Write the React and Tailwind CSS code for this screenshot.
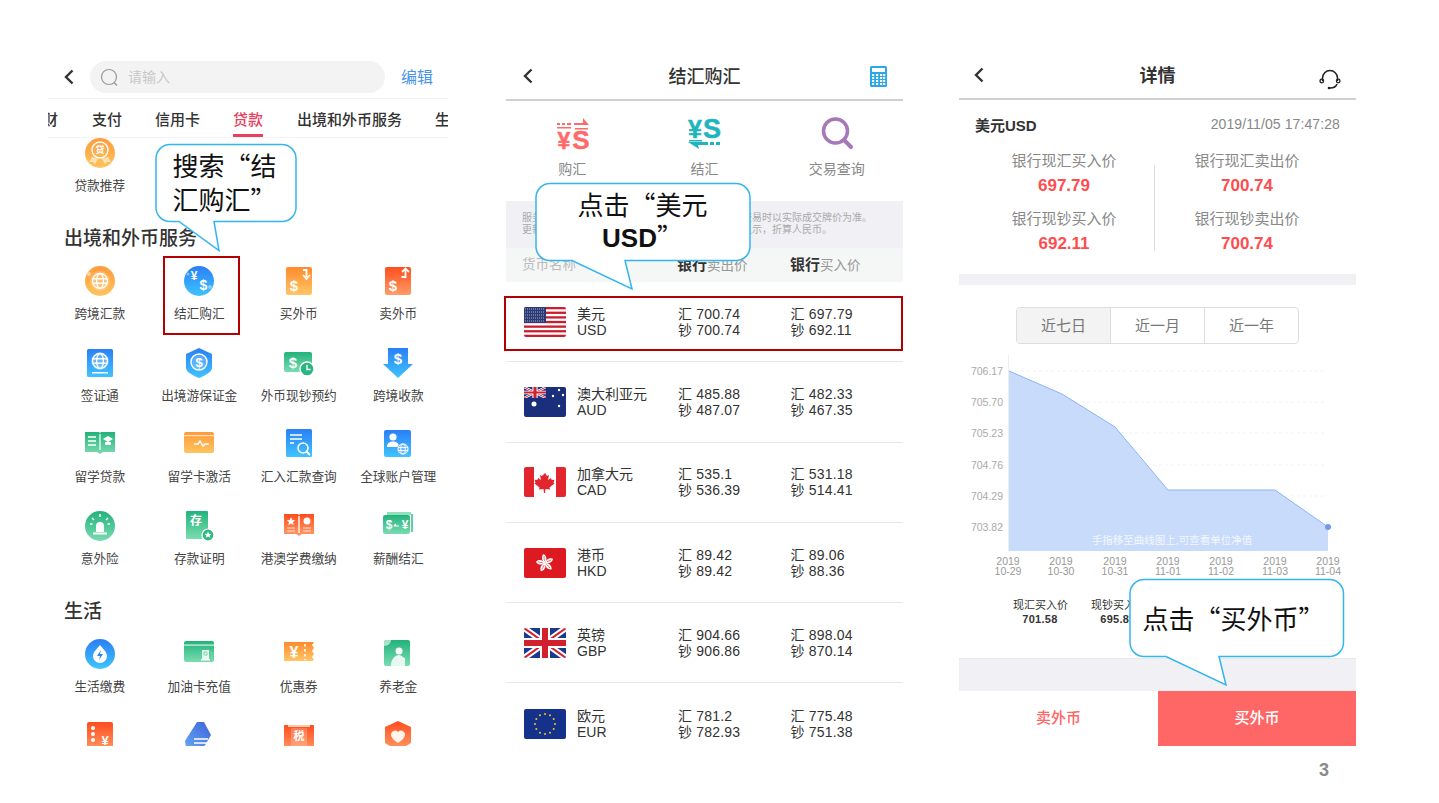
import React from "react";

const W = "#ffffff";
const T = ({ x = 15, y = 15, s = 12, c = W, w = 700, children, a = "middle" }) => (
  <text x={x} y={y} fontSize={s} fill={c} fontWeight={w} textAnchor={a} dominantBaseline="central">{children}</text>
);
const Globe = ({ x = 15, y = 15, r = 7, c = W, sw = 1.3 }) => (
  <g fill="none" stroke={c} strokeWidth={sw}>
    <circle cx={x} cy={y} r={r} />
    <ellipse cx={x} cy={y} rx={r * 0.45} ry={r} />
    <path d={`M${x - r} ${y - r * 0.3}H${x + r}M${x - r} ${y + r * 0.3}H${x + r}`} />
  </g>
);

const icons = {
  loan: (
    <>
      <circle cx="15" cy="15" r="15" fill="url(#gO)" />
      <circle cx="15" cy="12" r="8" fill="none" stroke={W} strokeWidth="1.4" />
      <T y={12} s={9}>贷</T>
      <path d="M7 19l-3 5 4 0 2 2 3-5M23 19l3 5-4 0-2 2-3-5" fill="#ffe2b5" />
    </>
  ),
  globe: (
    <>
      <circle cx="15" cy="15" r="15" fill="url(#gO)" />
      <circle cx="15" cy="15" r="10" fill="#ffffff" fillOpacity=".2" />
      <Globe r={7.5} />
      <circle cx="4" cy="8" r="2" fill="#ffffff" fillOpacity=".5" />
    </>
  ),
  jh: (
    <>
      <circle cx="15" cy="15" r="15" fill="url(#gB)" />
      <T x={10} y={10} s={12}>¥</T>
      <T x={19.5} y={18.5} s={14}>$</T>
      <circle cx="26" cy="21" r="2" fill="#ffffff" fillOpacity=".4" />
      <circle cx="4" cy="8" r="1.5" fill="#ffffff" fillOpacity=".4" />
    </>
  ),
  buy: (
    <>
      <rect x="2" y="1" width="26" height="28" rx="2" fill="url(#gO2)" />
      <T x={10} y={19} s={15}>$</T>
      <path d="M19 4h3.5v7M19 9l3.5 4 3.5-4" fill="none" stroke={W} strokeWidth="1.8" />
    </>
  ),
  sell: (
    <>
      <rect x="2" y="1" width="26" height="28" rx="2" fill="url(#gR)" />
      <T x={10} y={19} s={15}>$</T>
      <path d="M19 6l3.5-3.5L26 6M22.5 3v8h-4" fill="none" stroke={W} strokeWidth="1.8" />
    </>
  ),
  visa: (
    <>
      <rect x="2" y="1" width="26" height="28" rx="1.5" fill="url(#gB)" />
      <circle cx="15" cy="13" r="9" fill="#ffffff" fillOpacity=".25" />
      <Globe y={13} r={7.5} />
      <rect x="7" y="24" width="16" height="1.5" fill={W} />
    </>
  ),
  shield: (
    <>
      <path d="M15 0l13 6v14c0 4-8 8-13 10C10 28 2 24 2 20V6z" fill="url(#gB)" />
      <circle cx="15" cy="14" r="8" fill="#ffffff" fillOpacity=".2" stroke={W} strokeWidth="1.4" />
      <T y={14} s={13}>$</T>
    </>
  ),
  cash: (
    <>
      <rect x="0" y="4" width="28" height="20" rx="2" fill="url(#gG)" />
      <T x={9} y={14} s={15}>$</T>
      <circle cx="23" cy="21" r="7" fill="#2bb583" stroke={W} strokeWidth="1.4" />
      <path d="M23 17v4.500h3.500" fill="none" stroke={W} strokeWidth="1.4" />
    </>
  ),
  down: (
    <>
      <path d="M5 0h20v16h5L15 30 0 16h5z" fill="url(#gB)" />
      <T y={10} s={15}>$</T>
    </>
  ),
  book: (
    <>
      <path d="M0 3l14 0 1 1 1-1 14 0v20H18l-3 2-3-2H0z" fill="url(#gG)" />
      <rect x="14.400" y="5" width="1.200" height="16" fill={W} />
      <path d="M3 8h8M3 12h8M3 16h8" stroke={W} strokeWidth="1.600" />
      <path d="M18 10l5-3 5 3-5 3zM20 13h6v3h-6z" fill={W} />
    </>
  ),
  card: (
    <>
      <rect x="0" y="3" width="30" height="21" rx="2" fill="url(#gO)" />
      <rect x="0" y="6" width="30" height="1.200" fill="#ffffff" fillOpacity=".7" />
      <path d="M10 15h4l2-3 3 5 2-2h4" fill="none" stroke={W} strokeWidth="1.400" />
    </>
  ),
  doc: (
    <>
      <rect x="2" y="0" width="26" height="28" rx="1.500" fill="url(#gB)" />
      <path d="M6 6h12M6 10h12M6 14h4" stroke={W} strokeWidth="1.500" />
      <circle cx="19" cy="19" r="5" fill="none" stroke={W} strokeWidth="1.600" />
      <path d="M22.500 22.500l3.500 3.500" stroke={W} strokeWidth="1.800" />
    </>
  ),
  user: (
    <>
      <rect x="1" y="1" width="27" height="27" rx="2" fill="url(#gB)" />
      <circle cx="10" cy="8" r="3.600" fill={W} />
      <path d="M4 18c0-4 3-5.500 6-5.500s6 1.500 6 5.500z" fill={W} />
      <circle cx="20" cy="20" r="6" fill="#6db7ff" />
      <Globe x={20} y={20} r={5} sw={0.9} />
    </>
  ),
  alarm: (
    <>
      <circle cx="15" cy="15" r="15" fill="url(#gG)" />
      <path d="M11 21v-6a4 4 0 018 0v6z" fill={W} />
      <rect x="8" y="21.500" width="14" height="2" fill={W} />
      <path d="M15 3v3M7 7l2 2M23 7l-2 2M5 13h2.500M25 13h-2.500" stroke={W} strokeWidth="1.400" />
    </>
  ),
  save: (
    <>
      <path d="M3 0h20a1 1 0 011 1v27H3a1 1 0 01-1-1V1a1 1 0 011-1z" fill="url(#gG)" />
      <T x={12} y={10} s={12}>存</T>
      <circle cx="24" cy="24" r="6" fill="#33b884" stroke={W} strokeWidth="1.200" />
      <path d="M24 20.500l1 2.300 2.400.2-1.800 1.500.6 2.300-2.200-1.200-2.200 1.200.6-2.300-1.800-1.500 2.400-.2z" fill={W} />
    </>
  ),
  redbook: (
    <>
      <path d="M0 3h14l1 1 1-1h14v20H18l-3 2-3-2H0z" fill="url(#gR)" />
      <rect x="14.300" y="5" width="1.400" height="17" fill={W} />
      <path d="M7 7l1 2.500h2.500l-2 1.500.7 2.500L7 12l-2.200 1.500.7-2.500-2-1.500H6zM3 17h8M3 20h8M19 17h8M19 20h8" stroke={W} fill={W} strokeWidth=".8" />
      <circle cx="23" cy="10" r="3.500" fill={W} />
    </>
  ),
  salary: (
    <>
      <path d="M4 1h24v3H4z" fill="#8fe0bb" />
      <path d="M28 3h2v18h-2z" fill="#5fd0a2" />
      <rect x="0" y="4" width="27" height="19" rx="2" fill="url(#gG)" />
      <T x={6} y={14} s={12}>$</T>
      <T x={22} y={14} s={12}>¥</T>
      <path d="M11 15h5M13 13l-2 2" stroke={W} strokeWidth="1.200" fill="none" />
    </>
  ),
  bolt: (
    <>
      <circle cx="15" cy="15" r="15" fill="url(#gB)" />
      <path d="M15 6c3 4 7 7 7 11a7 7 0 01-14 0c0-4 4-7 7-11z" fill={W} />
      <path d="M16 11l-4 6h3l-1 4 4-6h-3z" fill="#2b83f5" />
    </>
  ),
  gas: (
    <>
      <rect x="0" y="2" width="30" height="21" rx="2" fill="url(#gG)" />
      <rect x="0" y="5.500" width="30" height="1.200" fill="#ffffff" fillOpacity=".8" />
      <path d="M18 11h7v10h-7z" fill="#e9fbf3" />
      <path d="M20 13h3v3h-3zM26 12l2 2v5" stroke="#7bd6ae" fill="none" />
      <rect x="17" y="20" width="9" height="1.500" fill={W} />
    </>
  ),
  coupon: (
    <>
      <path d="M0 3h30l-2 3 2 3-2 3 2 3-2 3 2 3-2 1H0z" fill="url(#gO2)" />
      <T x={10} y={13} s={16}>¥</T>
      <path d="M21 5v16" stroke={W} strokeWidth="1.600" strokeDasharray="2.500 2.500" />
    </>
  ),
  elder: (
    <>
      <rect x="1" y="1" width="26" height="26" rx="2" fill="url(#gG)" />
      <path d="M1 3a2 2 0 012-2h5c0 3-3 6-7 6z" fill="#ffffff" fillOpacity=".6" />
      <circle cx="16" cy="12" r="3.500" fill={W} />
      <path d="M8 27c0-7 4-11 8-11 3 0 4 3 6 3v8z" fill="#e6f9f0" />
    </>
  ),
  traffic: (
    <>
      <rect x="2" y="1" width="26" height="30" rx="2" fill="url(#gR)" />
      <circle cx="8" cy="7" r="2" fill={W} />
      <circle cx="8" cy="13" r="2" fill={W} />
      <circle cx="8" cy="19" r="2" fill={W} />
      <T x={20} y={19} s={13}>¥</T>
    </>
  ),
  diamond: (
    <>
      <path d="M13 1h7l7 13-7 12H2L1 20z" fill="url(#gB3)" />
      <path d="M10 18h14M10 22h14" stroke={W} strokeWidth="1.500" />
    </>
  ),
  tax: (
    <>
      <rect x="0" y="4" width="30" height="26" rx="1" fill="url(#gR)" />
      <rect x="4" y="4" width="22" height="2" fill="#ffc9a8" />
      <rect x="7" y="7" width="16" height="20" fill="#ffffff" fillOpacity=".2" />
      <T y={15} s={11}>税</T>
    </>
  ),
  heart: (
    <>
      <path d="M15 0l13 6v16L15 30 2 22V6z" fill="url(#gR)" />
      <path d="M15 22c-4-3-7-5-7-9a4 4 0 017-2 4 4 0 017 2c0 4-3 6-7 9z" fill="#fff3ea" />
    </>
  ),
};

const Ico = ({ n }) => (
  <svg width="30" height="30" viewBox="0 0 30 30" className="block overflow-visible">{icons[n]}</svg>
);

const Item = ({ n, t }) => (
  <div className="flex h-[81.500px] flex-col items-center">
    <Ico n={n} />
    <div className="mt-[9px] h-[18px] whitespace-nowrap text-[12.700px] leading-[18px] text-[#444]">{t}</div>
  </div>
);

const Chevron = () => (
  <svg width="11" height="16" viewBox="0 0 11 16" className="block">
    <path d="M9.500 1.500L3 8l6.500 6.500" fill="none" stroke="#333" strokeWidth="2.400" />
  </svg>
);

const grid1 = [
  ["globe", "跨境汇款"], ["jh", "结汇购汇"], ["buy", "买外币"], ["sell", "卖外币"],
  ["visa", "签证通"], ["shield", "出境游保证金"], ["cash", "外币现钞预约"], ["down", "跨境收款"],
  ["book", "留学贷款"], ["card", "留学卡激活"], ["doc", "汇入汇款查询"], ["user", "全球账户管理"],
  ["alarm", "意外险"], ["save", "存款证明"], ["redbook", "港澳学费缴纳"], ["salary", "薪酬结汇"],
];
const grid2 = [
  ["bolt", "生活缴费"], ["gas", "加油卡充值"], ["coupon", "优惠券"], ["elder", "养老金"],
  ["traffic", ""], ["diamond", ""], ["tax", ""], ["heart", ""],
];

function Panel1() {
  return (
    <div className="h-[686px] w-[400px] shrink-0 overflow-hidden">
      <div className="flex h-[39px] items-start border-b border-[#f3f3f3]">
        <div className="ml-[15px] mt-[9px]"><Chevron /></div>
        <div className="ml-[16px] mt-[1px] flex h-[32px] w-[295px] items-center rounded-full bg-[#f3f3f3] pl-[10px]">
          <svg width="19" height="19" viewBox="0 0 19 19">
            <circle cx="9" cy="9" r="7.500" fill="none" stroke="#999" strokeWidth="1.200" />
            <path d="M14 14.500l3 3" stroke="#999" strokeWidth="1.200" />
          </svg>
          <span className="ml-[9px] text-[14px] text-[#c8c8c8]">请输入</span>
        </div>
        <span className="ml-[16px] mt-[8px] text-[16px] leading-5 text-[#4a94e8]">编辑</span>
      </div>
      <div className="flex h-[39px] items-center overflow-hidden whitespace-nowrap border-b border-[#f3f3f3] pt-[4px] text-[15px] font-medium text-[#333]">
        <span className="flex w-[10px] shrink-0 justify-end overflow-hidden">财</span>
        <span className="ml-[34px]">支付</span>
        <span className="ml-[33px]">信用卡</span>
        <span className="relative ml-[33px] flex h-full items-center text-[#e8405e]">
          贷款
          <span className="absolute bottom-0 left-0 h-[3px] w-full bg-[#e8405e]" />
        </span>
        <span className="ml-[34px]">出境和外币服务</span>
        <span className="ml-[33px] w-[15px] overflow-hidden">生</span>
      </div>
      <div className="grid h-[81.500px] grid-cols-4 pl-[2px]"><Item n="loan" t="贷款推荐" /></div>
      <div className="flex h-[46.500px] items-start pl-[16px] pt-[7px] text-[19px] font-medium leading-6 text-[#333]">出境和外币服务</div>
      <div className="grid grid-cols-4 pl-[2px]">
        {grid1.map(([n, t]) => <Item key={t} n={n} t={t} />)}
      </div>
      <div className="flex h-[47px] items-start pl-[16px] pt-[8px] text-[19px] font-medium leading-6 text-[#333]">生活</div>
      <div className="grid grid-cols-4 pl-[2px]">
        {grid2.map(([n, t]) => <Item key={n} n={n} t={t} />)}
      </div>
    </div>
  );
}

const Flag = ({ children }) => (
  <svg width="42" height="30" viewBox="0 0 42 30" className="block shrink-0 rounded-[2px]">{children}</svg>
);
const Union = ({ w = 42, h = 30 }) => (
  <svg width={w} height={h} viewBox="0 0 42 30" x="0" y="0" preserveAspectRatio="none">
    <rect width="42" height="30" fill="#1a3a8f" />
    <path d="M0 0l42 30M42 0L0 30" stroke="#fff" strokeWidth="6" />
    <path d="M0 0l42 30M42 0L0 30" stroke="#d3202f" strokeWidth="2" />
    <path d="M21 0v30M0 15h42" stroke="#fff" strokeWidth="10" />
    <path d="M21 0v30M0 15h42" stroke="#d3202f" strokeWidth="6" />
  </svg>
);
const stars = Array.from({ length: 12 }, (_, i) => {
  const a = (i * Math.PI) / 6;
  return [21 + 10 * Math.sin(a), 15 - 10 * Math.cos(a)];
});
const flags = {
  us: (
    <Flag>
      <rect width="42" height="30" fill="#fff" />
      {[0, 1, 2, 3, 4, 5, 6].map((i) => <rect key={i} y={i * 4.62} width="42" height="2.310" fill="#c8202f" />)}
      <rect width="22" height="16" fill="#2b3a75" />
      <path d="M1 2h20M1 5h20M1 8h20M1 11h20M1 14h20" stroke="#aab2d0" strokeWidth="1.200" strokeDasharray="1 1" />
    </Flag>
  ),
  au: (
    <Flag>
      <rect width="42" height="30" fill="#1a2f7c" />
      <Union w={22} h={11} />
      <circle cx="10" cy="17" r="2.500" fill="#fff" />
      {[[29, 9], [35, 3], [39, 8], [35, 19]].map(([x, y]) => <circle key={x + "" + y} cx={x} cy={y} r="1.200" fill="#fff" />)}
    </Flag>
  ),
  ca: (
    <Flag>
      <rect width="42" height="30" fill="#fff" />
      <rect width="10" height="30" fill="#e3262e" />
      <rect x="32" width="10" height="30" fill="#e3262e" />
      <path d="M21 6l2 3 2-1-1 5 3-2 .7 2 2.800-.3-1 3 1 .8-5 4 .5 2-4.500-.5-.5 4h-1l-.500-4-4.500.5.500-2-5-4 1-.8-1-3 2.800.3.700-2 3 2-1-5 2 1z" fill="#e3262e" />
    </Flag>
  ),
  hk: (
    <Flag>
      <rect width="42" height="30" fill="#dd1a22" />
      {[0, 72, 144, 216, 288].map((d) => (
        <g key={d} transform={`rotate(${d} 21 15)`}>
          <path d="M21 15c-3.500-2.500-4-6.500-1.500-9 3 1.500 4 5.500 1.500 9z" fill="#fff" />
          <path d="M20.500 13c-.5-2 -.5-3.500-.5-5" stroke="#dd1a22" strokeWidth=".6" fill="none" />
        </g>
      ))}
    </Flag>
  ),
  gb: <Flag><Union /></Flag>,
  eu: (
    <Flag>
      <rect width="42" height="30" fill="#14328c" />
      {stars.map(([x, y], i) => <circle key={i} cx={x} cy={y} r="1" fill="#f5c518" />)}
    </Flag>
  ),
};

const rows = [
  ["us", "美元", "USD", "700.74", "700.74", "697.79", "692.11"],
  ["au", "澳大利亚元", "AUD", "485.88", "487.07", "482.33", "467.35"],
  ["ca", "加拿大元", "CAD", "535.1", "536.39", "531.18", "514.41"],
  ["hk", "港币", "HKD", "89.42", "89.42", "89.06", "88.36"],
  ["gb", "英镑", "GBP", "904.66", "906.86", "898.04", "870.14"],
  ["eu", "欧元", "EUR", "781.2", "782.93", "775.48", "751.38"],
];

const Row = ({ r }) => (
  <div className="flex h-[80.300px] shrink-0 items-center border-b border-[#e8e8e8] pl-[18px] text-[14px] leading-4 text-[#333] last:border-b-0">
    {flags[r[0]]}
    <div className="ml-[11px] w-[101px]"><div>{r[1]}</div><div>{r[2]}</div></div>
    <div className="w-[112.500px] tracking-[0.2px]"><div>汇 {r[3]}</div><div>钞 {r[4]}</div></div>
    <div className="tracking-[0.2px]"><div>汇 {r[5]}</div><div>钞 {r[6]}</div></div>
  </div>
);

function Panel2() {
  return (
    <div className="flex h-[686px] w-[397px] shrink-0 flex-col overflow-hidden">
      <div className="relative flex h-[41px] shrink-0 items-center justify-center border-b-2 border-[#d0d0d4] pb-[4px]">
        <div className="absolute left-[16px] top-[8px]"><Chevron /></div>
        <span className="text-[18px] font-medium text-[#333]">结汇购汇</span>
        <svg width="17" height="21" viewBox="0 0 17 21" className="absolute left-[364px] top-[6px]">
          <rect width="17" height="21" rx="1.500" fill="#29a9e8" />
          <rect x="2" y="2" width="13" height="4" fill="#fff" />
          {[8, 11, 14, 17].map((y) => [2, 6, 10, 13].map((x) => <rect key={x + "-" + y} x={x} y={y} width="2.200" height="2" fill="#fff" />))}
        </svg>
      </div>
      <div className="grid h-[100px] shrink-0 grid-cols-3">
        <div className="flex flex-col items-center pt-[15px]">
          <svg width="34" height="34" viewBox="0 0 34 34" className="block">
            <path d="M19 7h9V2l6 7H19zM2 7h3v2H2zM7 7h3v2H7zM12 7h4v2h-4zM2 11h14v1.500H2zM20 12h13v1.500H20z" fill="#ff6b6b" />
            <text x="9" y="33" fontSize="23" fontWeight="700" fill="#ff6b6b" stroke="#ff6b6b" strokeWidth=".5" textAnchor="middle">¥</text>
            <text x="26" y="33" fontSize="26" fontWeight="700" fill="#ff6b6b" stroke="#ff6b6b" strokeWidth=".5" textAnchor="middle">S</text>
          </svg>
          <span className="mt-[9px] text-[14px] leading-5 text-[#888]">购汇</span>
        </div>
        <div className="flex flex-col items-center pt-[15px]">
          <svg width="34" height="34" viewBox="0 0 34 34" className="block">
            <text x="8" y="22" fontSize="25" fontWeight="700" fill="#1fb5bd" stroke="#1fb5bd" strokeWidth=".5" textAnchor="middle">¥</text>
            <text x="25" y="22" fontSize="27" fontWeight="700" fill="#1fb5bd" stroke="#1fb5bd" strokeWidth=".5" textAnchor="middle">S</text>
            <path d="M2 24h13v1.500H2zM1 26h20v3H11l1 4zM23 26h4v3h-4zM29 26h4v3h-4z" fill="#1fb5bd" />
          </svg>
          <span className="mt-[9px] text-[14px] leading-5 text-[#888]">结汇</span>
        </div>
        <div className="flex flex-col items-center pt-[15px]">
          <svg width="34" height="34" viewBox="0 0 34 34" className="block">
            <circle cx="15.500" cy="15" r="12" fill="none" stroke="#a678b8" strokeWidth="3.500" />
            <path d="M24 24l7 7" stroke="#a678b8" strokeWidth="4" strokeLinecap="round" />
          </svg>
          <span className="mt-[9px] text-[14px] leading-5 text-[#888]">交易查询</span>
        </div>
      </div>
      <div className="h-[47px] shrink-0 whitespace-nowrap bg-[#f0f0f5] pl-[16px] pt-[11px] text-[10px] leading-[12px] text-[#aaa]">
        <div>服务时间为工作日九点至五点，此牌价仅供参考，交易时以实际成交牌价为准。</div>
        <div>更新时间以页面为准，外币金额按当前牌价计算并显示，折算人民币。</div>
      </div>
      <div className="flex h-[34px] shrink-0 items-center bg-[#f5f6f6] pl-[16px] text-[13.500px] text-[#999]">
        <span className="w-[155px] text-[#bbb]">货币名称</span>
        <span className="w-[113px]"><b className="text-[15px] font-bold text-[#333]">银行</b>卖出价</span>
        <span><b className="text-[15px] font-bold text-[#333]">银行</b>买入价</span>
      </div>
      {rows.map((r) => <Row key={r[2]} r={r} />)}
    </div>
  );
}

const Quote = ({ a, b }) => (
  <div className="flex flex-col items-center">
    <div className="text-[15px] leading-5 text-[#888]">{a}</div>
    <div className="mt-[5px] text-[17px] font-bold leading-5 text-[#ff4d4f]">{b}</div>
  </div>
);

function Panel3() {
  const pts = "50,21 103,44 156,77 209,140 316,140 369,177";
  return (
    <div className="flex h-[686px] w-[397px] shrink-0 flex-col overflow-hidden">
      <div className="relative flex h-[40px] shrink-0 items-center justify-center border-b-2 border-[#d0d0d4] pb-[5px]">
        <div className="absolute left-[14px] top-[7px]"><Chevron /></div>
        <span className="text-[18px] font-bold text-[#333]">详情</span>
        <svg width="22" height="22" viewBox="0 0 22 22" className="absolute left-[360px] top-[9px]">
          <path d="M3.500 12V9a7.500 7.500 0 0115 0v3" fill="none" stroke="#222" strokeWidth="1.500" />
          <circle cx="2.800" cy="12" r="1.800" fill="none" stroke="#222" strokeWidth="1.300" />
          <circle cx="19.200" cy="12" r="1.800" fill="none" stroke="#222" strokeWidth="1.300" />
          <path d="M18 15c-1 3-4 4-7 4" fill="none" stroke="#222" strokeWidth="1.500" />
          <circle cx="10" cy="19" r="1.300" fill="#222" />
        </svg>
      </div>
      <div className="flex h-[51px] shrink-0 items-center justify-between px-[16px] pt-[1px]">
        <span className="text-[15px] font-bold text-[#333]">美元USD</span>
        <span className="mb-[3px] text-[14px] tracking-[0.1px] text-[#888]">2019/11/05 17:47:28</span>
      </div>
      <div className="relative grid h-[123px] shrink-0 grid-cols-[183px_183px] content-start gap-y-[13px] pl-[13.500px]">
        <Quote a="银行现汇买入价" b="697.79" />
        <Quote a="银行现汇卖出价" b="700.74" />
        <Quote a="银行现钞买入价" b="692.11" />
        <Quote a="银行现钞卖出价" b="700.74" />
        <span className="absolute left-[195px] top-[14px] h-[86px] w-px bg-[#dcdce0]" />
      </div>
      <div className="h-[11px] shrink-0 bg-[#f0f0f5]" />
      <div className="flex justify-center pt-[22px]">
        <div className="flex h-[37px] w-[283px] overflow-hidden rounded-[4px] border border-[#dddddd] text-[15px] text-[#777]">
          <div className="flex flex-1 items-center justify-center border-r border-[#dddddd] bg-[#f3f3f3] pt-[1px]">近七日</div>
          <div className="flex flex-1 items-center justify-center border-r border-[#dddddd] pt-[1px]">近一月</div>
          <div className="flex flex-1 items-center justify-center pt-[1px]">近一年</div>
        </div>
      </div>
      <svg width="397" height="232" viewBox="0 0 397 232" className="mt-[6px] block shrink-0">
        <path d="M49.500 5V201" stroke="#eeeeee" />
        {[21, 52, 83, 115, 146, 177].map((y) => (
          <path key={y} d={`M50 ${y.toString()}H368`} stroke="#f2f2f2" strokeDasharray="3 3" />
        ))}
        <polygon points={`50,201 ${pts} 369,201`} fill="#c9dbfa" />
        <polyline points={pts} fill="none" stroke="#8ab4f8" />
        <circle cx="369" cy="177" r="3" fill="#6f9be8" />
        {[["706.17", 21], ["705.70", 52], ["705.23", 83], ["704.76", 115], ["704.29", 146], ["703.82", 177]].map(([t, y]) => (
          <text key={t} x="44" y={y + 4} fontSize="10.500" fill="#aaaaaa" textAnchor="end">{t}</text>
        ))}
        <text x="213" y="194" fontSize="10.500" fill="#ffffff" fillOpacity=".8" textAnchor="middle">手指移至曲线图上,可查看单位净值</text>
        {[["10-29", 49], ["10-30", 102], ["10-31", 156], ["11-01", 209], ["11-02", 262], ["11-03", 316], ["11-04", 369]].map(([t, x]) => (
          <g key={t} fontSize="10.500" fill="#999999" textAnchor="middle">
            <text x={x} y="215">2019</text>
            <text x={x} y="225">{t}</text>
          </g>
        ))}
      </svg>
      <div className="flex h-[76px] shrink-0 pl-[54px] pt-[16px] text-center">
        {[["现汇买入价", "701.58"], ["现钞买入价", "695.85"]].map(([a, b], i) => (
          <div key={i} className="w-[78px] whitespace-nowrap pr-[24px] text-[11px] leading-[14px] text-[#333]">
            <div>{a}</div>
            <div className="font-bold tracking-[0.3px]">{b}</div>
          </div>
        ))}
      </div>
      <div className="h-[33px] shrink-0 border-t border-[#e8e8ec] bg-[#f0f0f5]" />
      <div className="flex h-[55px] shrink-0 text-[15px] font-medium">
        <div className="flex w-[199px] items-center justify-center text-[#ff6666]">卖外币</div>
        <div className="flex flex-1 items-center justify-center bg-[#ff6666] text-white">买外币</div>
      </div>
    </div>
  );
}

const Bubble = ({ x, y, w, h, tail, children, className }) => (
  <div className="absolute" style={{ left: x, top: y, width: w, height: h }}>
    <svg width={w} height={tail[2][1] + 2} className="absolute left-0 top-0 block overflow-visible">
      <path
        d={`M14 .500H${w - 14}a14 14 0 0114 14V${h - 14}a14 14 0 01-14 14H${tail[1][0]}L${tail[2][0]} ${tail[2][1]}L${tail[0][0]} ${h}H14a14 14 0 01-14-14V14.500a14 14 0 0114-14z`}
        fill="#ffffff"
        stroke="#33b5f0"
        strokeWidth="1.500"
      />
    </svg>
    <div className={`absolute inset-0 font-['Noto_Sans_CJK_SC','Liberation_Sans',sans-serif] ${className}`}>{children}</div>
  </div>
);

export default function App() {
  return (
    <div className="relative h-[803px] w-[1439px] overflow-hidden bg-white font-['Liberation_Sans','Noto_Sans_CJK_SC',sans-serif]">
      <svg width="0" height="0" className="absolute">
        <defs>
          <linearGradient id="gO" x1="0" y1="0" x2="0" y2="1"><stop offset="0" stopColor="#ff9a3a" /><stop offset="1" stopColor="#ffc45e" /></linearGradient>
          <linearGradient id="gO2" x1="0" y1="0" x2="0" y2="1"><stop offset="0" stopColor="#ff8a2c" /><stop offset="1" stopColor="#ffc667" /></linearGradient>
          <linearGradient id="gB" x1="0" y1="0" x2="0" y2="1"><stop offset="0" stopColor="#2a7ff6" /><stop offset="1" stopColor="#3fc4ff" /></linearGradient>
          <linearGradient id="gB3" x1="1" y1="0" x2="0" y2="1"><stop offset="0" stopColor="#3f63d8" /><stop offset="1" stopColor="#62a6f5" /></linearGradient>
          <linearGradient id="gG" x1="0" y1="0" x2="0" y2="1"><stop offset="0" stopColor="#22b27c" /><stop offset="1" stopColor="#7adcb0" /></linearGradient>
          <linearGradient id="gR" x1="0" y1="0" x2="0" y2="1"><stop offset="0" stopColor="#ff4d1f" /><stop offset="1" stopColor="#ff9c66" /></linearGradient>
        </defs>
      </svg>

      <div className="flex pl-[48px] pt-[60px]">
        <Panel1 />
        <div className="ml-[58px]"><Panel2 /></div>
        <div className="ml-[56px]"><Panel3 /></div>
      </div>
      <div className="pr-[110px] pt-[14px] text-right text-[18px] font-bold leading-5 text-[#8a8a8a]">3</div>

      <div className="absolute left-[163px] top-[256px] h-[79px] w-[77px] border-2 border-[#b40000]" />
      <div className="absolute left-[504px] top-[296px] h-[55px] w-[399px] border-2 border-[#b40000]" />

      <Bubble x={155.500} y={144} w={140} h={77.500} tail={[[23, 0], [58, 0], [63, 106.500]]} className="pl-[17px] pt-[4px] text-[26px] leading-[34px] text-[#111]">
        搜索“结<br />汇购汇”
      </Bubble>
      <Bubble x={535.500} y={183} w={214} h={77.500} tail={[[36, 0], [89, 0], [96, 106]]} className="pt-[5px] text-center text-[26px] leading-[32px] text-[#111]">
        点击“美元<br /><b className="font-['Liberation_Sans',sans-serif]">USD</b>”
      </Bubble>
      <Bubble x={1129.500} y={579} w={213.500} h={77.500} tail={[[36, 0], [89, 0], [96, 106]]} className="whitespace-nowrap pl-[13px] pt-[22px] text-[26px] leading-[34px] text-[#111]">
        点击“买外币”
      </Bubble>
    </div>
  );
}
